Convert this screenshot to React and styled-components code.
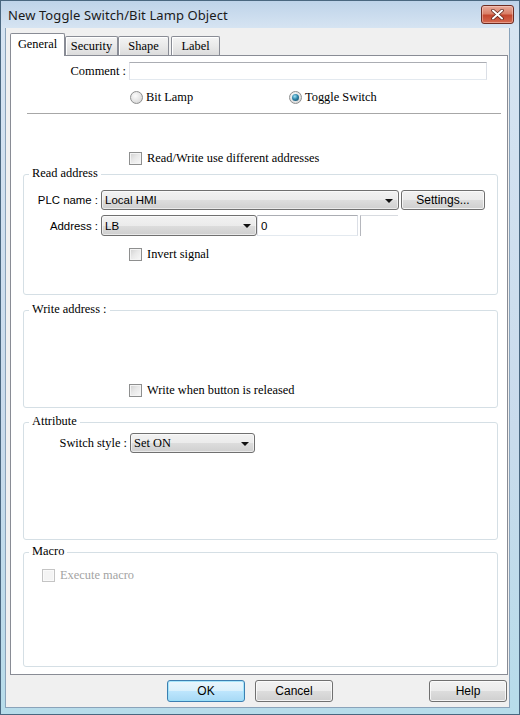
import React from 'react';
import styled, { createGlobalStyle } from 'styled-components';

const SERIF = `"Liberation Serif", "DejaVu Serif", "Noto Sans CJK TC", serif`;
const SANS = `"Liberation Sans", Arial, "Noto Sans CJK TC", sans-serif`;

const GlobalStyle = createGlobalStyle`
  html, body { margin: 0; padding: 0; background: #fff; }
  body { width: 520px; height: 715px; overflow: hidden; }
  *, *::before, *::after { box-sizing: border-box; }
`;

const Window = styled.div`
  width: 520px;
  height: 715px;
  display: flex;
  flex-direction: column;
  border: 1px solid #4a6780;
  background: linear-gradient(180deg, #bed3e9 0px, #d6e4f2 27px, #c9dbec 60%, #b7dcea 100%);
`;

const TitleBar = styled.div`
  height: 27px;
  flex: none;
  display: flex;
  align-items: center;
  justify-content: space-between;
  padding: 0 5px 0 7px;
`;

const Title = styled.span`
  font-family: "Noto Sans", "Open Sans", sans-serif;
  font-size: 13px;
  color: #1a1a1a;
  letter-spacing: 0.1px;
`;

const CloseButton = styled.div`
  width: 33px;
  height: 19px;
  border: 1px solid #6e2c22;
  border-radius: 3px;
  display: flex;
  align-items: center;
  justify-content: center;
  background: linear-gradient(180deg, #e9ab9c 0%, #d98068 45%, #c4472f 55%, #d56a50 100%);
  box-shadow: inset 0 0 0 1px rgba(255, 220, 210, 0.45);
`;

const FrameBody = styled.div`
  flex: 1;
  display: flex;
  flex-direction: column;
  padding: 0 9px 6px 4px;
`;

const Client = styled.div`
  flex: 1;
  display: flex;
  flex-direction: column;
  background: #f0f0f0;
  border: 1px solid #8aa3ba;
  border-top: none;
  padding: 5px 1px 5px 4px;
`;

const TabStrip = styled.div`
  height: 22px;
  flex: none;
  display: flex;
  align-items: flex-end;
`;

const Tab = styled.div`
  width: ${(p) => p.$w}px;
  height: ${(p) => (p.$active ? 23 : 19)}px;
  margin-bottom: ${(p) => (p.$active ? -1 : 0)}px;
  margin-left: ${(p) => p.$ml || 0}px;
  position: relative;
  z-index: ${(p) => (p.$active ? 2 : 1)};
  border: 1px solid #898c95;
  border-bottom: none;
  border-radius: 2px 2px 0 0;
  background: ${(p) => (p.$active ? '#fff' : 'linear-gradient(180deg, #f4f4f4 0%, #e9e9e9 50%, #dcdcdc 100%)')};
  box-shadow: ${(p) => (p.$active ? 'none' : 'inset 1px 1px 0 #fff')};
  display: flex;
  align-items: center;
  justify-content: center;
  font-family: ${SERIF};
  font-size: 12.4px;
  color: #000;
  padding-bottom: ${(p) => (p.$active ? 1 : 0)}px;
`;

const Panel = styled.div`
  width: 498px;
  height: 620px;
  flex: none;
  border: 1px solid #898c95;
  background: #fff;
  display: flex;
  flex-direction: column;
`;

const Row = styled.div`
  display: flex;
  align-items: center;
  flex: none;
  height: ${(p) => p.$h || 14}px;
  margin-top: ${(p) => p.$mt || 0}px;
  padding-left: ${(p) => p.$pl || 0}px;
`;

const Label = styled.span`
  width: ${(p) => p.$w}px;
  flex: none;
  text-align: right;
  margin-right: 3px;
  font-family: ${(p) => (p.$sans ? SANS : SERIF)};
  font-size: ${(p) => (p.$sans ? 11.4 : 12.4)}px;
  color: #000;
  white-space: nowrap;
`;

const TextBox = styled.div`
  width: ${(p) => p.$w}px;
  height: ${(p) => p.$h}px;
  flex: none;
  background: #fff;
  border: 1px solid;
  border-color: #abadb3 #dbdfe6 #e3e9ef #e2e3ea;
  display: flex;
  align-items: center;
  padding-left: 3px;
  font-family: ${SANS};
  font-size: 11.5px;
  color: #000;
`;

const Stub = styled.div`
  width: 38px;
  height: 21px;
  margin-left: 2px;
  flex: none;
  border-left: 1px solid #b5b7bd;
  border-top: 1px solid #d8dbe0;
`;

const Combo = styled.div`
  width: ${(p) => p.$w}px;
  height: ${(p) => p.$h || 20}px;
  flex: none;
  border: 1px solid #707070;
  border-radius: 3px;
  background: linear-gradient(180deg, #f2f2f2 0%, #ebebeb 50%, #dddddd 50%, #cfcfcf 100%);
  box-shadow: inset 0 0 0 1px rgba(255, 255, 255, 0.55);
  display: flex;
  align-items: center;
  justify-content: space-between;
  padding: 0 5px 0 3px;
  font-family: ${(p) => (p.$serif ? SERIF : SANS)};
  font-size: ${(p) => (p.$serif ? 12.4 : 11.5)}px;
  color: #000;
`;

const Arrow = styled.span`
  width: 0;
  height: 0;
  border-left: 4px solid transparent;
  border-right: 4px solid transparent;
  border-top: 4px solid #111;
  margin-top: 1px;
`;

const Button = styled.button`
  width: ${(p) => p.$w || 78}px;
  height: ${(p) => p.$h || 22}px;
  flex: none;
  margin: 0;
  margin-left: ${(p) => (p.$push ? 'auto' : '0')};
  padding: 0;
  border: 1px solid ${(p) => (p.$default ? '#3c7fb1' : '#707070')};
  border-radius: 3px;
  background: ${(p) =>
    p.$default
      ? 'linear-gradient(180deg, #eaf6fd 0%, #d9f0fc 50%, #bee6fd 50%, #a7d9f5 100%)'
      : 'linear-gradient(180deg, #f2f2f2 0%, #ebebeb 50%, #dddddd 50%, #cfcfcf 100%)'};
  box-shadow: inset 0 0 0 1px ${(p) => (p.$default ? 'rgba(150, 225, 250, 0.8)' : 'rgba(252, 252, 252, 0.8)')};
  font-family: ${SANS};
  font-size: 12px;
  color: #000;
`;

const CheckBox = styled.span`
  width: 13px;
  height: 13px;
  flex: none;
  margin-right: 5px;
  border: 1px solid ${(p) => (p.$disabled ? '#c4c4c4' : '#8e8f8f')};
  background: ${(p) =>
    p.$disabled ? '#f4f4f4' : 'linear-gradient(135deg, #cfcfcf 0%, #e8e8e8 45%, #f9f9f9 100%)'};
  box-shadow: inset 0 0 0 1px ${(p) => (p.$disabled ? '#fafafa' : '#f4f4f4')};
`;

const RadioDot = styled.span`
  width: 13px;
  height: 13px;
  flex: none;
  margin-right: 3px;
  border-radius: 50%;
  border: 1px solid #8e8f8f;
  display: flex;
  align-items: center;
  justify-content: center;
  background: radial-gradient(circle at 40% 35%, #fbfbfb 0%, #e4e4e4 55%, #c9c9c9 100%);
  &::after {
    content: '';
    display: ${(p) => (p.$checked ? 'block' : 'none')};
    width: 7px;
    height: 7px;
    border-radius: 50%;
    background: radial-gradient(circle at 40% 35%, #9fe0f4 0%, #2f86aa 45%, #123f58 100%);
  }
`;

const Text = styled.span`
  font-family: ${SERIF};
  font-size: 12.4px;
  color: ${(p) => (p.$disabled ? '#a3a3a3' : '#000')};
  white-space: nowrap;
`;

const RadioGroup = styled.div`
  display: grid;
  grid-template-columns: 159px auto;
  align-items: center;
  height: 14px;
  margin-top: 10px;
  padding-left: 119px;
  flex: none;
`;

const RadioItem = styled.label`
  display: flex;
  align-items: center;
`;

const Separator = styled.div`
  height: 1px;
  flex: none;
  margin: 9px 6px 0 16px;
  background: #a7a7a7;
`;

const Group = styled.div`
  position: relative;
  flex: none;
  height: ${(p) => p.$h}px;
  margin: ${(p) => p.$mt}px 9px 0 12px;
  border: 1px solid #d5dfe5;
  border-radius: 3px;
  padding-top: ${(p) => p.$pt}px;
  display: flex;
  flex-direction: column;
`;

const Legend = styled.span`
  position: absolute;
  left: 5px;
  top: -9px;
  padding: 0 3px;
  background: #fff;
  font-family: ${SERIF};
  font-size: 12.4px;
  line-height: 14px;
  color: #000;
  white-space: nowrap;
`;

const ButtonRow = styled.div`
  display: flex;
  align-items: center;
  gap: 10px;
  margin-top: 5px;
  height: 22px;
  flex: none;
  padding: 0 1px 0 157px;
`;

const CloseGlyph = () => (
  <svg width="13" height="11" viewBox="0 0 13 11">
    <path d="M2 1.5 L11 9.5 M11 1.5 L2 9.5" stroke="#5a2118" strokeWidth="3.4" strokeLinecap="round" />
    <path d="M2 1.5 L11 9.5 M11 1.5 L2 9.5" stroke="#ffffff" strokeWidth="2" strokeLinecap="round" />
  </svg>
);

const Check = ({ children, disabled }) => (
  <>
    <CheckBox $disabled={disabled} />
    <Text $disabled={disabled}>{children}</Text>
  </>
);

export default function App() {
  return (
    <>
      <GlobalStyle />
      <Window>
        <TitleBar>
          <Title>New Toggle Switch/Bit Lamp Object</Title>
          <CloseButton>
            <CloseGlyph />
          </CloseButton>
        </TitleBar>
        <FrameBody>
          <Client>
            <TabStrip>
              <Tab $active $w={55}>General</Tab>
              <Tab $w={53}>Security</Tab>
              <Tab $w={51}>Shape</Tab>
              <Tab $w={49} $ml={2}>Label</Tab>
            </TabStrip>
            <Panel>
              <Row $h={18} $mt={6}>
                <Label $w={115}>Comment :</Label>
                <TextBox $w={358} $h={18} />
              </Row>

              <RadioGroup>
                <RadioItem>
                  <RadioDot />
                  <Text>Bit Lamp</Text>
                </RadioItem>
                <RadioItem>
                  <RadioDot $checked />
                  <Text>Toggle Switch</Text>
                </RadioItem>
              </RadioGroup>

              <Separator />

              <Row $mt={37} $pl={118}>
                <Check>Read/Write use different addresses</Check>
              </Row>

              <Group $h={121} $mt={9} $pt={15}>
                <Legend>Read address</Legend>
                <Row $h={20}>
                  <Label $w={74} $sans>PLC name :</Label>
                  <Combo $w={298}>
                    <span>Local HMI</span>
                    <Arrow />
                  </Combo>
                  <Button $w={84} $h={20} style={{ marginLeft: 2 }}>Settings...</Button>
                </Row>
                <Row $h={21} $mt={5}>
                  <Label $w={74} $sans>Address :</Label>
                  <Combo $w={156} $h={21}>
                    <span>LB</span>
                    <Arrow />
                  </Combo>
                  <TextBox $w={101} $h={21}>0</TextBox>
                  <Stub />
                </Row>
                <Row $mt={11} $pl={105}>
                  <Check>Invert signal</Check>
                </Row>
              </Group>

              <Group $h={98} $mt={15} $pt={72}>
                <Legend>Write address :</Legend>
                <Row $pl={105}>
                  <Check>Write when button is released</Check>
                </Row>
              </Group>

              <Group $h={118} $mt={14} $pt={10}>
                <Legend>Attribute</Legend>
                <Row $h={20}>
                  <Label $w={103}>Switch style :</Label>
                  <Combo $w={125} $serif>
                    <span>Set ON</span>
                    <Arrow />
                  </Combo>
                </Row>
              </Group>

              <Group $h={115} $mt={12} $pt={15}>
                <Legend>Macro</Legend>
                <Row $pl={18}>
                  <Check disabled>Execute macro</Check>
                </Row>
              </Group>
            </Panel>
            <ButtonRow>
              <Button $default>OK</Button>
              <Button>Cancel</Button>
              <Button $push>Help</Button>
            </ButtonRow>
          </Client>
        </FrameBody>
      </Window>
    </>
  );
}
